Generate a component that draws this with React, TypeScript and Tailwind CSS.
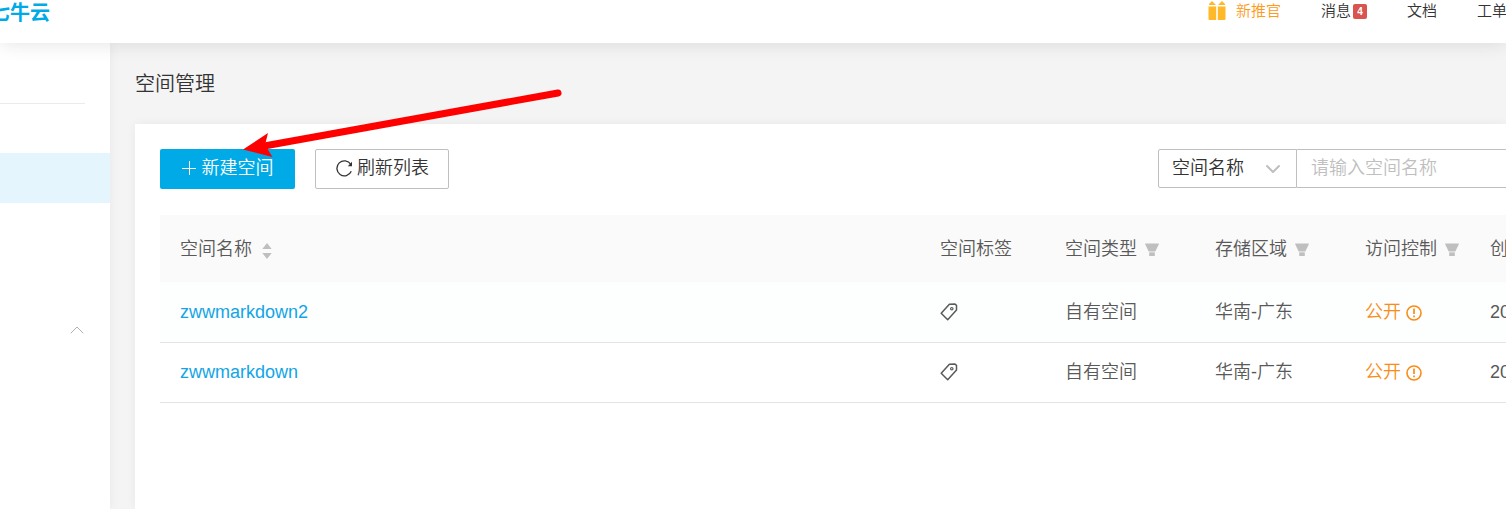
import { ChevronDown, ChevronUp } from 'lucide-react';

const buckets = [
  { name: 'zwwmarkdown2', type: '自有空间', region: '华南-广东', access: '公开', created: '20' },
  { name: 'zwwmarkdown', type: '自有空间', region: '华南-广东', access: '公开', created: '20' },
];

function GiftIcon() {
  return (
    <svg className="w-[18px] h-5" viewBox="0 0 18 20" fill="#ffb829" aria-hidden="true">
      <path d="M1 5V4l3-3 4 4zM10 5l4-4 3 3v1z" />
      <path d="M.5 7h7.700v13H1.500a1 1 0 0 1-1-1zM9.800 7h7.700v12a1 1 0 0 1-1 1H9.800z" />
      <path d="M.5 6h7.700v1H.5zM9.800 6h7.700v1H9.800z" fill="#ffd98a" />
    </svg>
  );
}

function PlusIcon() {
  return (
    <svg className="w-[14px] h-[14px]" viewBox="0 0 14 14" stroke="currentColor" strokeWidth="1" aria-hidden="true">
      <path d="M7.5 0v14M0 7.5h14" />
    </svg>
  );
}

function RefreshIcon() {
  return (
    <svg className="w-[18px] h-[18px]" viewBox="0 0 18 18" fill="none" aria-hidden="true">
      <path d="M15.800 5.400A7.500 7.500 0 1 0 16.300 12.300" stroke="currentColor" strokeWidth="1.300" />
      <path d="M17 2.800v4.400h-4.200z" fill="currentColor" />
    </svg>
  );
}

function SortIcon() {
  return (
    <svg className="mt-1 w-[10px] h-4" viewBox="0 0 10 16" fill="#bfbfbf" aria-hidden="true">
      <path d="M5 0l4.700 6H.3zM5 16l4.700-6H.3z" />
    </svg>
  );
}

function FilterIcon() {
  return (
    <svg className="mt-0.5 w-[14px] h-[14px]" viewBox="0 0 14 14" fill="#bfbfbf" aria-hidden="true">
      <path d="M.3.5h13.400v1L10.300 8.500H3.700L.3 1.500z" />
      <path d="M4.200 9.300h5.600V13H4.200z" />
    </svg>
  );
}

function TagIcon() {
  return (
    <svg className="w-[18px] h-[18px]" viewBox="0 0 18 18" fill="none" stroke="#595959" strokeWidth="1.500" strokeLinejoin="round" aria-hidden="true">
      <path d="M9.400 1.300 15 1.100l1.500 1.200V7L7.700 16.700 1.200 10.300z" />
      <circle cx="11.800" cy="5.700" r="1.200" strokeWidth="1.200" />
    </svg>
  );
}

function WarningIcon() {
  return (
    <svg className="mt-0.5 w-4 h-4" viewBox="0 0 16 16" fill="none" stroke="currentColor" aria-hidden="true">
      <circle cx="8" cy="8" r="7" strokeWidth="1.600" />
      <path d="M8 3.500v5.500M8 10.600v1.700" strokeWidth="1.700" />
    </svg>
  );
}

function FilterHeader({ label }: { label: string }) {
  return (
    <th className="pl-5 font-[350] text-left">
      <div className="flex items-center gap-2">
        {label}
        <button type="button" aria-label={`筛选${label}`}>
          <FilterIcon />
        </button>
      </div>
    </th>
  );
}

export default function App() {
  return (
    <div className="relative min-h-screen flex flex-col overflow-hidden bg-[#f4f4f4] text-[#333333] font-[350] font-['Liberation_Sans','Noto_Sans_CJK_SC',sans-serif]">
      {/* Top bar */}
      <header className="relative z-10 h-[43px] flex justify-between items-start bg-white shadow-[0_0_20px_rgba(0,0,0,0.12)]">
        <a href="#" className="w-[50px] flex justify-end overflow-hidden whitespace-nowrap text-xl leading-[26px] font-bold text-[#00aae7]">
          七牛云
        </a>
        <nav className="flex gap-10 -mr-px text-[15px] leading-[22px] whitespace-nowrap">
          <a href="#" className="flex items-start gap-[10px] text-[#ff9a1a]">
            <GiftIcon />
            新推官
          </a>
          <a href="#" className="flex items-center gap-0.5">
            消息
            <span className="w-[14px] h-[15px] rounded-xs bg-[#d9534f] text-white text-[10px] leading-[15px] font-bold text-center">
              4
            </span>
          </a>
          <a href="#">文档</a>
          <a href="#">工单</a>
        </nav>
      </header>

      <div className="flex-1 flex">
        {/* Sidebar */}
        <aside className="w-[110px] shrink-0 bg-white shadow-[0_0_10px_rgba(0,0,0,0.06)]">
          <div className="mr-[25px] h-[61px] border-b border-[#ebebeb]" />
          <a href="#" aria-label="空间管理" className="mt-[49px] h-[50px] block bg-[#e4f5fd]" />
          <button type="button" aria-label="收起" className="mt-[115px] ml-auto mr-[21px] block text-[#b0b0b0]">
            <ChevronUp className="w-6 h-6" strokeWidth={1} />
          </button>
        </aside>

        <main className="flex-1 min-w-0 pl-[25px] flex flex-col">
          <h1 className="h-[81px] flex items-center text-xl">空间管理</h1>

          <div className="flex-1 pl-[25px] pt-[25px] bg-white shadow-[0_0_10px_rgba(0,0,0,0.05)]">
            {/* Toolbar */}
            <div className="flex items-start gap-5 text-lg">
              <button type="button" className="w-[135px] h-10 pb-0.5 flex items-center justify-center gap-[6px] rounded-xs bg-[#00aae7] text-white">
                <PlusIcon />
                新建空间
              </button>
              <button type="button" className="w-[134px] h-10 pb-0.5 flex items-center justify-center gap-1 rounded-xs border border-[#bfbfbf] bg-white">
                <RefreshIcon />
                刷新列表
              </button>
              <div className="ml-auto flex h-[39px]">
                <div className="relative">
                  <select aria-label="搜索字段" className="w-[139px] h-full pl-[13px] pb-0.5 appearance-none rounded-l-xs border border-[#bfbfbf] bg-white">
                    <option>空间名称</option>
                  </select>
                  <ChevronDown className="absolute right-3 top-2 w-6 h-6 text-[#bfbfbf] pointer-events-none" strokeWidth={2} />
                </div>
                <input
                  type="text"
                  aria-label="空间名称"
                  placeholder="请输入空间名称"
                  className="w-[209px] h-full pl-[14px] border-y border-[#bfbfbf] bg-white placeholder:text-[#bfbfbf]"
                />
              </div>
            </div>

            {/* Bucket list */}
            <table className="mt-[26px] w-full table-fixed text-lg text-[#595959] whitespace-nowrap">
              <colgroup>
                <col />
                <col className="w-[125px]" />
                <col className="w-[150px]" />
                <col className="w-[150px]" />
                <col className="w-[125px]" />
                <col className="w-9" />
              </colgroup>
              <thead className="bg-[#fafafa]">
                <tr className="h-[67px]">
                  <th className="pl-5 font-[350] text-left">
                    <div className="flex items-center gap-[10px]">
                      空间名称
                      <button type="button" aria-label="排序">
                        <SortIcon />
                      </button>
                    </div>
                  </th>
                  <th className="pl-5 font-[350] text-left">空间标签</th>
                  <FilterHeader label="空间类型" />
                  <FilterHeader label="存储区域" />
                  <FilterHeader label="访问控制" />
                  <th className="pl-5 font-[350] text-left">创</th>
                </tr>
              </thead>
              <tbody>
                {buckets.map((bucket) => (
                  <tr key={bucket.name} className="h-[60px] border-b border-[#e3e5e5] odd:bg-[#fdfefe]">
                    <td className="pl-5">
                      <a href="#" className="text-[#12a5e6]">{bucket.name}</a>
                    </td>
                    <td className="pl-5">
                      <button type="button" aria-label="编辑标签" className="block">
                        <TagIcon />
                      </button>
                    </td>
                    <td className="pl-5">{bucket.type}</td>
                    <td className="pl-5">{bucket.region}</td>
                    <td className="pl-5">
                      <div className="flex items-center gap-[5px] text-[#fa8c16]">
                        {bucket.access}
                        <WarningIcon />
                      </div>
                    </td>
                    <td className="pl-5">{bucket.created}</td>
                  </tr>
                ))}
              </tbody>
            </table>
          </div>
        </main>
      </div>

      {/* Arrow pointing at the create button */}
      <svg className="absolute z-20 left-[243px] top-[88px] w-[320px] h-[70px] pointer-events-none" viewBox="0 0 320 70" aria-hidden="true">
        <path d="M315 5 24 57.500" stroke="#ff0000" strokeWidth="7" strokeLinecap="round" />
        <path d="M0 61.500 25 45 22 57 29.500 69z" fill="#ff0000" />
      </svg>
    </div>
  );
}
